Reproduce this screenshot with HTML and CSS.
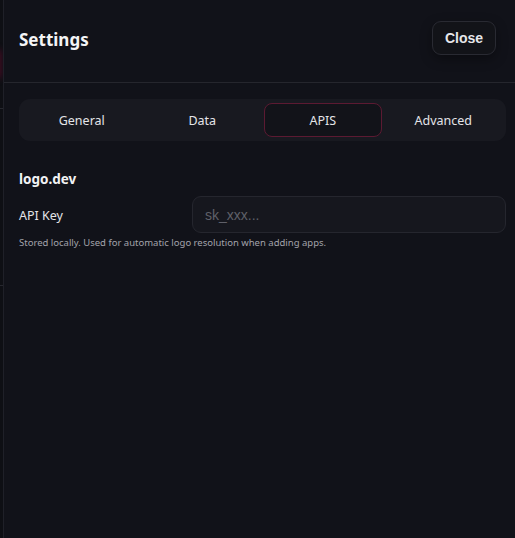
FILE: index.html
```html
<!DOCTYPE html>
<html>
<head>
<meta charset="utf-8">
<link rel="stylesheet" href="styles.css">
</head>
<body>
<div class="backdrop">
  <div class="glow"></div>
  <div class="line l1"></div>
  <div class="line l2"></div>
</div>
<div class="panel">
  <header class="head">
    <h1 class="title">Settings</h1>
    <button class="close">Close</button>
  </header>
  <div class="body">
    <nav class="tabs">
      <div class="tab">General</div>
      <div class="tab">Data</div>
      <div class="tab active">APIS</div>
      <div class="tab">Advanced</div>
    </nav>
    <section class="section">
      <h2 class="sec-title">logo.dev</h2>
      <div class="row">
        <label class="label">API Key</label>
        <input class="input" type="text" placeholder="sk_xxx...">
      </div>
      <p class="hint">Stored locally. Used for automatic logo resolution when adding apps.</p>
    </section>
  </div>
</div>
</body>
</html>
```
FILE: styles.css
```css
* { box-sizing: border-box; }
html, body { margin: 0; height: 100%; }
body {
  background: #0c0d11;
  font-family: "Noto Sans", "Open Sans", sans-serif;
  color: #e8e8ec;
  display: flex;
  overflow: hidden;
}
.backdrop {
  width: 3px;
  flex: none;
  position: relative;
  background: #0e0f14;
  overflow: hidden;
}
.glow {
  position: absolute;
  left: -6px; top: 50px;
  width: 8px; height: 28px;
  background: #3e0c22;
  filter: blur(3px);
}
.line { position: absolute; left: 0; width: 3px; height: 1px; background: #26272e; }
.l1 { top: 108px; }
.l2 { top: 285px; }
.panel {
  flex: 1;
  background: #111219;
  border-left: 1px solid #1f2028;
  display: flex;
  flex-direction: column;
}
.head {
  height: 83px;
  border-bottom: 1px solid #25262d;
  display: flex;
  align-items: center;
  justify-content: space-between;
  padding: 0 19px 4px 15px;
}
.title {
  margin: 0;
  font-size: 17px;
  font-weight: 700;
  color: #f4f4f6;
}
.close {
  font-family: "Liberation Sans", Arial, sans-serif;
  font-size: 14px;
  font-weight: 700;
  color: #e6e6ea;
  background: #121318;
  border: 1px solid #292a32;
  border-radius: 9px;
  width: 64px;
  height: 34px;
  margin-bottom: 3px;
  box-shadow: 0 4px 12px rgba(0,0,0,0.35);
}
.body {
  padding: 16px 9px 0 15px;
}
.tabs {
  display: grid;
  grid-template-columns: repeat(4, 1fr);
  background: #181920;
  border-radius: 11px;
  height: 42px;
  padding: 4px 4px;
  gap: 3px;
}
.tab {
  display: flex;
  align-items: center;
  justify-content: center;
  font-size: 12.5px;
  color: #e4e4e8;
  border-radius: 8px;
  border: 1px solid transparent;
}
.tab.active {
  background: #121319;
  border-color: #5c1a32;
}
.section { padding-top: 28px; }
.sec-title {
  margin: 0;
  font-size: 13.5px;
  font-weight: 700;
  color: #f2f2f4;
  line-height: 20px;
}
.row {
  display: flex;
  align-items: center;
  margin-top: 7px;
}
.label {
  width: 173px;
  flex: none;
  font-size: 12.5px;
  color: #e4e4e8;
  padding-top: 2px;
}
.input {
  flex: 1;
  height: 37px;
  background: #16171e;
  border: 1px solid #25262e;
  border-radius: 9px;
  padding: 0 12px;
  font-family: "Liberation Sans", Arial, sans-serif;
  font-size: 14px;
  color: #e4e4e8;
  outline: none;
}
.input::placeholder { color: #5f6069; }
.hint {
  margin: 3px 0 0;
  font-size: 9.5px;
  color: #a3a3ab;
}
```
